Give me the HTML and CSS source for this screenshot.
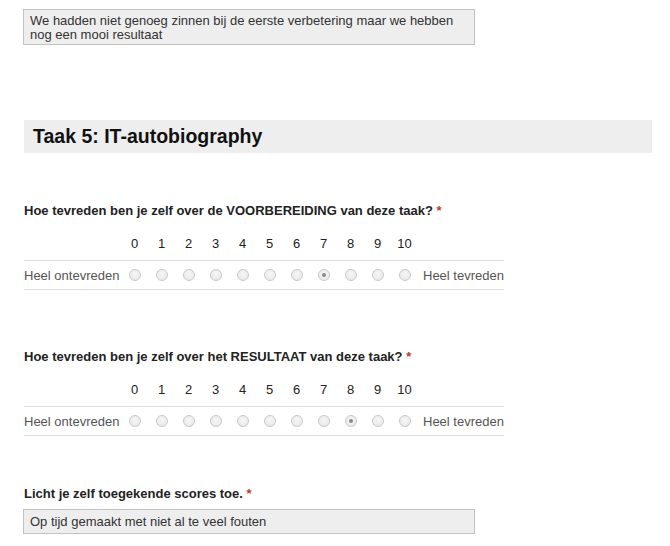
FILE: index.html
```html
<!DOCTYPE html>
<html lang="nl">
<head>
<meta charset="utf-8">
<title>Taak 5</title>
<link rel="stylesheet" href="styles.css">
</head>
<body>
<div class="page">
  <div class="answer answer-tall">We hadden niet genoeg zinnen bij de eerste verbetering maar we hebben nog een mooi resultaat</div>

  <h2 class="section">Taak 5: IT-autobiography</h2>

  <div class="question q1">
    <div class="q-title">Hoe tevreden ben je zelf over de VOORBEREIDING van deze taak? <span class="req">*</span></div>
    <div class="scale">
      <div class="num-row">
        <span></span>
        <span>0</span><span>1</span><span>2</span><span>3</span><span>4</span><span>5</span><span>6</span><span>7</span><span>8</span><span>9</span><span>10</span>
        <span></span>
      </div>
      <div class="radio-row">
        <span class="lbl">Heel ontevreden</span>
        <span class="cell"><input type="radio" name="a"></span>
        <span class="cell"><input type="radio" name="a"></span>
        <span class="cell"><input type="radio" name="a"></span>
        <span class="cell"><input type="radio" name="a"></span>
        <span class="cell"><input type="radio" name="a"></span>
        <span class="cell"><input type="radio" name="a"></span>
        <span class="cell"><input type="radio" name="a"></span>
        <span class="cell"><input type="radio" name="a" checked></span>
        <span class="cell"><input type="radio" name="a"></span>
        <span class="cell"><input type="radio" name="a"></span>
        <span class="cell"><input type="radio" name="a"></span>
        <span class="lbl lbl-right">Heel tevreden</span>
      </div>
    </div>
  </div>

  <div class="question q2">
    <div class="q-title">Hoe tevreden ben je zelf over het RESULTAAT van deze taak? <span class="req">*</span></div>
    <div class="scale">
      <div class="num-row">
        <span></span>
        <span>0</span><span>1</span><span>2</span><span>3</span><span>4</span><span>5</span><span>6</span><span>7</span><span>8</span><span>9</span><span>10</span>
        <span></span>
      </div>
      <div class="radio-row">
        <span class="lbl">Heel ontevreden</span>
        <span class="cell"><input type="radio" name="b"></span>
        <span class="cell"><input type="radio" name="b"></span>
        <span class="cell"><input type="radio" name="b"></span>
        <span class="cell"><input type="radio" name="b"></span>
        <span class="cell"><input type="radio" name="b"></span>
        <span class="cell"><input type="radio" name="b"></span>
        <span class="cell"><input type="radio" name="b"></span>
        <span class="cell"><input type="radio" name="b"></span>
        <span class="cell"><input type="radio" name="b" checked></span>
        <span class="cell"><input type="radio" name="b"></span>
        <span class="cell"><input type="radio" name="b"></span>
        <span class="lbl lbl-right">Heel tevreden</span>
      </div>
    </div>
  </div>

  <div class="question q3">
    <div class="q-title">Licht je zelf toegekende scores toe. <span class="req">*</span></div>
    <div class="answer answer-short">Op tijd gemaakt met niet al te veel fouten</div>
  </div>
</div>
</body>
</html>
```

FILE: styles.css
```css
html, body {
  margin: 0;
  padding: 0;
  background: #fff;
}

body {
  font-family: "Liberation Sans", Arial, sans-serif;
  font-size: 13px;
  color: #222;
}

.page {
  padding: 9px 0 0 24px;
}

.answer {
  box-sizing: border-box;
  width: 452px;
  margin-left: -1px;
  background: #eee;
  border: 1px solid #c2c2c2;
  color: #333;
  font-size: 13px;
  line-height: 14px;
  padding: 4px 6px;
}

.answer-tall {
  height: 36px;
}

.answer-short {
  height: 25px;
  padding-top: 5px;
  margin-top: 7px;
}

.section {
  margin: 75px 0 0 0;
  width: 628px;
  height: 33px;
  box-sizing: border-box;
  background: #eee;
  font-size: 19.5px;
  font-weight: bold;
  line-height: 33px;
  padding-left: 9px;
  color: #111;
}

.q-title {
  font-weight: bold;
  font-size: 13px;
  line-height: 16px;
  color: #222;
}

.req {
  color: #c43b1d;
}

.q1 {
  margin-top: 50px;
}

.q2 {
  margin-top: 59px;
}

.q3 {
  margin-top: 50px;
}

.scale {
  margin-top: 12px;
  width: 480px;
}

.num-row,
.radio-row {
  display: grid;
  grid-template-columns: 97px repeat(11, 27px) 86px;
}

.num-row {
  height: 30px;
  align-items: end;
  padding-bottom: 9px;
  box-sizing: border-box;
  border-bottom: 1px solid #dcdcdc;
  line-height: 15px;
  color: #222;
}

.num-row span {
  text-align: center;
}

.radio-row {
  height: 29px;
  box-sizing: border-box;
  align-items: center;
  border-bottom: 1px solid #dcdcdc;
}

.lbl {
  color: #555;
  white-space: nowrap;
}

.lbl-right {
  padding-left: 5px;
}

.cell {
  display: flex;
  justify-content: center;
  align-items: center;
}

.cell input {
  -webkit-appearance: none;
  appearance: none;
  margin: 0;
  width: 12px;
  height: 12px;
  border-radius: 50%;
  border: 1px solid #c9c9c9;
  background: radial-gradient(circle at 50% 40%, #f6f6f6 0%, #e6e6e6 100%);
  position: relative;
}

.cell input:checked::after {
  content: "";
  position: absolute;
  left: 3px;
  top: 3px;
  width: 4px;
  height: 4px;
  border-radius: 50%;
  background: #8a8a8a;
}
```
